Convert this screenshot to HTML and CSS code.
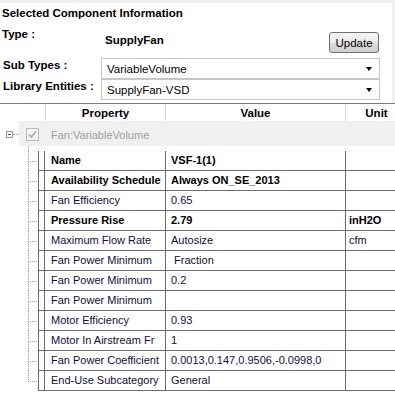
FILE: index.html
```html
<!DOCTYPE html>
<html lang="en">

<head>
    <meta charset="UTF-8">
    <title>Selected Component Information</title>
    <link rel="stylesheet" href="styles.css">
</head>

<body>

    <div class="panel">
        <div class="title">Selected Component Information</div>
        <div class="type-row">
            <div class="type-label">Type :</div>
            <div class="type-value">SupplyFan</div>
            <button class="update">Update</button>
        </div>
        <div class="field">
            <div class="field-label">Sub Types :</div>
            <div class="combo"><span>VariableVolume</span><i class="arrow"></i></div>
        </div>
        <div class="field">
            <div class="field-label">Library Entities :</div>
            <div class="combo"><span>SupplyFan-VSD</span><i class="arrow"></i></div>
        </div>
    </div>

    <div class="grid">
        <div class="grid-head">
            <div class="h-gap"></div>
            <div class="h-cell h-prop">Property</div>
            <div class="h-cell h-val">Value</div>
            <div class="h-cell h-unit">Unit</div>
        </div>

        <div class="group">
            <div class="expander"><span class="minus"></span><span class="stub"></span></div>
            <div class="group-body">
                <svg class="check" width="13" height="13" viewBox="0 0 13 13">
                    <rect x="0.5" y="0.5" width="12" height="12" fill="#f4f4f4" stroke="#b9b9b9" />
                    <path d="M3 6.5 L5.3 9 L10 3.5" fill="none" stroke="#a8a8a8" stroke-width="1.6" />
                </svg>
                <span class="group-name">Fan:VariableVolume</span>
            </div>
        </div>

        <div class="spacer"><div class="down"></div></div>

        <div class="row bold">
            <div class="tree"><div class="tick"></div><div class="down"></div></div>
            <div class="rh"></div><div class="c prop">Name</div><div class="c val">VSF-1(1)</div><div class="c unit"></div>
        </div>
        <div class="row bold">
            <div class="tree"><div class="tick"></div><div class="down"></div></div>
            <div class="rh"></div><div class="c prop">Availability Schedule</div><div class="c val">Always ON_SE_2013</div><div class="c unit"></div>
        </div>
        <div class="row">
            <div class="tree"><div class="tick"></div><div class="down"></div></div>
            <div class="rh"></div><div class="c prop">Fan Efficiency</div><div class="c val">0.65</div><div class="c unit"></div>
        </div>
        <div class="row bold">
            <div class="tree"><div class="tick"></div><div class="down"></div></div>
            <div class="rh"></div><div class="c prop">Pressure Rise</div><div class="c val">2.79</div><div class="c unit">inH2O</div>
        </div>
        <div class="row">
            <div class="tree"><div class="tick"></div><div class="down"></div></div>
            <div class="rh"></div><div class="c prop">Maximum Flow Rate</div><div class="c val">Autosize</div><div class="c unit">cfm</div>
        </div>
        <div class="row">
            <div class="tree"><div class="tick"></div><div class="down"></div></div>
            <div class="rh"></div><div class="c prop">Fan Power Minimum</div><div class="c val">&nbsp;Fraction</div><div class="c unit"></div>
        </div>
        <div class="row">
            <div class="tree"><div class="tick"></div><div class="down"></div></div>
            <div class="rh"></div><div class="c prop">Fan Power Minimum</div><div class="c val">0.2</div><div class="c unit"></div>
        </div>
        <div class="row">
            <div class="tree"><div class="tick"></div><div class="down"></div></div>
            <div class="rh"></div><div class="c prop">Fan Power Minimum</div><div class="c val"></div><div class="c unit"></div>
        </div>
        <div class="row">
            <div class="tree"><div class="tick"></div><div class="down"></div></div>
            <div class="rh"></div><div class="c prop">Motor Efficiency</div><div class="c val">0.93</div><div class="c unit"></div>
        </div>
        <div class="row">
            <div class="tree"><div class="tick"></div><div class="down"></div></div>
            <div class="rh"></div><div class="c prop">Motor In Airstream Fr</div><div class="c val">1</div><div class="c unit"></div>
        </div>
        <div class="row">
            <div class="tree"><div class="tick"></div><div class="down"></div></div>
            <div class="rh"></div><div class="c prop">Fan Power Coefficient</div><div class="c val">0.0013,0.147,0.9506,-0.0998,0</div><div class="c unit"></div>
        </div>
        <div class="row last">
            <div class="tree"><div class="tick"></div><div class="down"></div></div>
            <div class="rh"></div><div class="c prop">End-Use Subcategory</div><div class="c val">General</div><div class="c unit"></div>
        </div>
    </div>

</body>

</html>
```

FILE: styles.css
```css
body {
    margin: 0;
    background-color: #f0f0f0;
    font-family: "Liberation Sans", Arial, sans-serif;
    overflow: hidden;
}

/* painel superior */
.panel {
    margin: 3px 3px 0 0;
    height: 100px;
    box-sizing: border-box;
    padding: 3px 0 0 2px;
    background-color: #fff;
    font-size: 11.5px;
}

.title {
    font-weight: bold;
    line-height: 14px;
    height: 14px;
}

.type-row {
    display: flex;
    align-items: flex-start;
    height: 38px;
}

.type-label {
    width: 103px;
    margin-top: 7px;
    font-weight: bold;
    line-height: 14px;
}

.type-value {
    margin-top: 13px;
    font-weight: bold;
    line-height: 14px;
}

.update {
    margin: 12px 13px 0 auto;
    width: 50px;
    height: 21px;
    padding: 0;
    border: 1px solid #707070;
    border-radius: 3px;
    background: linear-gradient(#f3f3f3, #ebebeb 50%, #dcdcdc 50%, #cfcfcf);
    font-family: inherit;
    font-size: 11.5px;
    color: #000;
}

.field {
    display: flex;
    height: 21px;
}

.field-label {
    width: 98px;
    padding-left: 1px;
    font-weight: bold;
    line-height: 14px;
}

.combo {
    width: 279px;
    height: 21px;
    box-sizing: border-box;
    border: 1px solid #c6c6c6;
    padding-left: 5px;
    display: flex;
    align-items: center;
}

.arrow {
    margin: 1px 7px 0 auto;
    width: 0;
    height: 0;
    border-left: 3px solid transparent;
    border-right: 3px solid transparent;
    border-top: 4px solid #000;
}

/* grade de propriedades */
.grid {
    height: 292px;
    overflow: hidden;
    background-color: #fff;
    border-top: 1px solid #7d7d7d;
    font-size: 11px;
    color: #120e3c;
}

.grid-head {
    display: flex;
    height: 17px;
    font-weight: bold;
    font-size: 11.5px;
    color: #000;
}

.h-gap {
    width: 46px;
    flex: none;
    box-sizing: border-box;
    border-right: 1px solid #dcdcdc;
}

.h-cell {
    flex: none;
    box-sizing: border-box;
    text-align: center;
    padding-top: 2px;
    line-height: 15px;
    border-right: 1px solid #dcdcdc;
}

.h-prop {
    width: 120px;
}

.h-val {
    width: 180px;
}

.h-unit {
    width: 62px;
}

.group {
    display: flex;
    height: 25px;
}

.expander {
    width: 19px;
    flex: none;
    display: flex;
    align-items: center;
    padding-top: 2px;
    box-sizing: border-box;
}

.minus {
    margin-left: 6px;
    width: 7px;
    height: 7px;
    box-sizing: border-box;
    border: 1px solid #9a9a9a;
    position: relative;
}

.minus::after {
    content: "";
    position: absolute;
    left: 1px;
    top: 2px;
    width: 3px;
    height: 1px;
    background-color: #2b4a80;
}

.stub {
    width: 6px;
    border-top: 1px dotted #a0a0a0;
}

.group-body {
    flex: 1;
    background-color: #f0f0f0;
    display: flex;
    align-items: center;
    padding-top: 2px;
    box-sizing: border-box;
}

.check {
    margin-left: 7px;
    flex: none;
}

.group-name {
    margin-left: 12px;
    color: #9e9e9e;
}

.spacer {
    height: 5px;
}

.spacer .down {
    height: 5px;
}

.row {
    display: flex;
    height: 20px;
}

.tree {
    width: 38px;
    flex: none;
}

.tick {
    margin-left: 28px;
    width: 10px;
    height: 10px;
    border-left: 1px dotted #a0a0a0;
    border-bottom: 1px dotted #a0a0a0;
}

.down {
    margin-left: 28px;
    height: 9px;
    border-left: 1px dotted #a0a0a0;
}

.last .down {
    border-left: none;
}

.rh,
.c {
    flex: none;
    box-sizing: border-box;
    height: 20px;
    border-bottom: 1px solid #6c6c6c;
    line-height: 19px;
    white-space: nowrap;
}

.rh {
    width: 7px;
    border-left: 1px solid #6c6c6c;
    border-right: 1px solid #6c6c6c;
}

.prop {
    width: 121px;
    padding-left: 6px;
    border-right: 1px solid #6c6c6c;
}

.val {
    width: 180px;
    padding-left: 5px;
    border-right: 1px solid #6c6c6c;
}

.unit {
    width: 62px;
    padding-left: 3px;
}

.bold .c {
    font-weight: bold;
    color: #000;
}
```
